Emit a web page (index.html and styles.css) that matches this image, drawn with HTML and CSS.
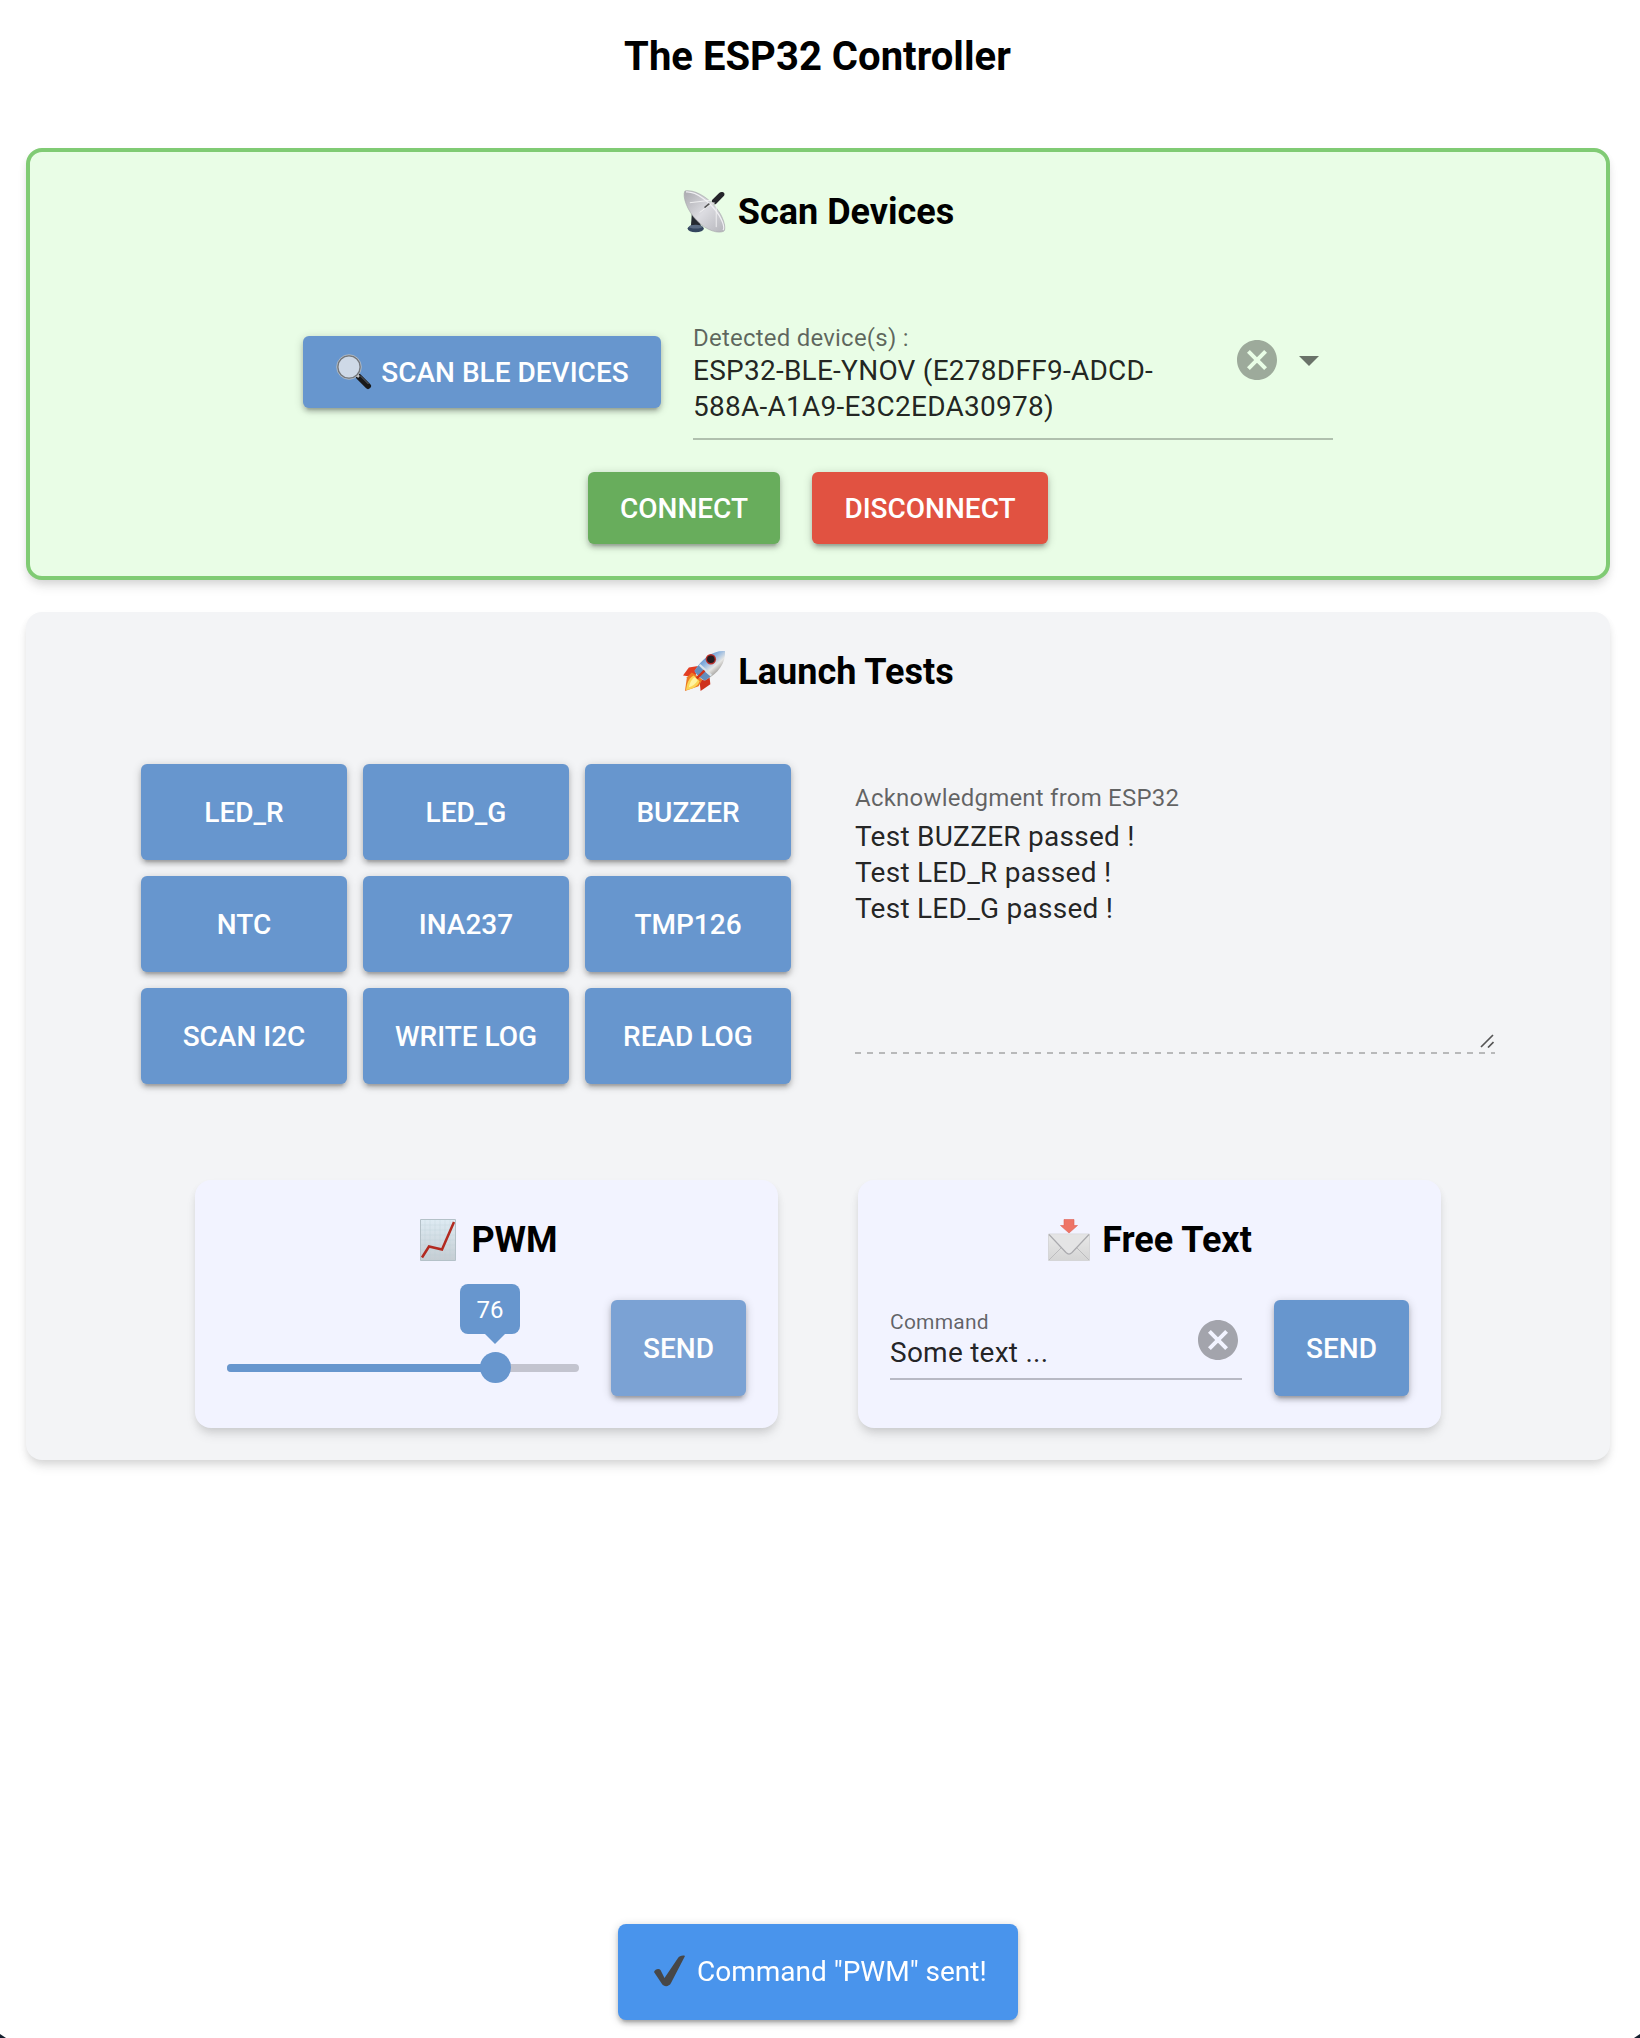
FILE: index.html
```html
<!DOCTYPE html>
<html lang="en">
<head>
<meta charset="utf-8">
<title>The ESP32 Controller</title>
<link rel="stylesheet" href="styles.css">
</head>
<body>
<svg class="defs" width="0" height="0" aria-hidden="true">
  <symbol id="cancel" viewBox="0 0 24 24"><path d="M12 2C6.47 2 2 6.47 2 12s4.47 10 10 10 10-4.47 10-10S17.53 2 12 2zm5 13.59L15.59 17 12 13.41 8.41 17 7 15.59 10.59 12 7 8.41 8.41 7 12 10.59 15.59 7 17 8.41 13.41 12 17 15.59z"/></symbol>
</svg>
<main class="page">
  <h1 class="title">The ESP32 Controller</h1>

  <section class="panel panel-scan">
    <h2 class="heading">
      <svg class="emoji emoji-dish" viewBox="0 0 44 44">
        <defs>
          <linearGradient id="dish" x1="0" y1="0" x2="1" y2="1"><stop offset="0" stop-color="#a9a9ae"/><stop offset=".5" stop-color="#dcdce1"/><stop offset="1" stop-color="#b4b4ba"/></linearGradient>
        </defs>
        <path d="M9 24l7 4 3 11H8z" fill="#252a31"/>
        <ellipse cx="13" cy="39.500" rx="8.300" ry="3.700" fill="#34465f"/><ellipse cx="13" cy="37.500" rx="7" ry="2" fill="#5a6b82"/>
        <path d="M2 1C12-1 28 8 38 24c4 7 6 15 4 18-5 3-18 0-28-11C4 21-1 6 2 1z" fill="url(#dish)" stroke="#a5a5aa" stroke-width=".6"/>
        <path d="M3 2c10-1 25 10 34 24 4 7 6 12 4 15" fill="none" stroke="#f0f0f3" stroke-width="1.200"/>
        <path d="M7 13L33 10M34 11v27M33 11L17 23" fill="none" stroke="#f4f4f5" stroke-width=".9"/>
        <path d="M22 18l5-4" stroke="#555" stroke-width="1.500"/>
        <path d="M30 10l7-7c2-2 7-1 5 3l-8 8c-2 2-6-1-4-4z" fill="#25252a"/><path d="M28 12l5 1-3 3z" fill="#ddd"/>
      </svg>
      <span>Scan Devices</span>
    </h2>
    <div class="scan-row">
      <button class="btn btn-scan">
        <svg class="emoji emoji-lens" viewBox="0 0 36 36">
          <path d="M23 23l9 9" stroke="#18191b" stroke-width="6" stroke-linecap="round"/><path d="M24 21.500l8.500 8.500" stroke="#64676b" stroke-width="1"/>
          <path d="M20 20l3 3" stroke="#c3c5c8" stroke-width="2.500"/>
          <circle cx="13" cy="13" r="11.300" fill="#ced9e7" stroke="#74787d" stroke-width="1.700"/><circle cx="13" cy="13" r="12.300" fill="none" stroke="#c5c8cb" stroke-width=".7"/>
        </svg>
        <span>SCAN BLE DEVICES</span>
      </button>
      <div class="field field-device">
        <div class="field-text">
          <div class="label">Detected device(s) :</div>
          <div class="value">ESP32-BLE-YNOV (E278DFF9-ADCD-<br>588A-A1A9-E3C2EDA30978)</div>
        </div>
        <svg class="icon icon-clear"><use href="#cancel"/></svg>
        <svg class="icon icon-arrow" viewBox="0 0 24 24"><path d="M7 10l5 5 5-5z"/></svg>
      </div>
    </div>
    <div class="connect-row">
      <button class="btn btn-connect"><span>CONNECT</span></button>
      <button class="btn btn-disconnect"><span>DISCONNECT</span></button>
    </div>
  </section>

  <section class="panel panel-tests">
    <h2 class="heading">
      <svg class="emoji emoji-rocket" viewBox="0 0 44 44">
        <defs><linearGradient id="hull" x1=".2" y1="0" x2=".9" y2=".8"><stop offset="0" stop-color="#3773b8"/><stop offset=".4" stop-color="#8db4e0"/><stop offset=".65" stop-color="#e6e6e4"/><stop offset="1" stop-color="#77736e"/></linearGradient></defs>
        <path d="M17 16L6 18 0 26l12 2z" fill="#e23d22"/><path d="M27 26l1 9-10 7-1-10z" fill="#cf321c"/>
        <path d="M9 23L4 28 2 42l14-5 4-7z" fill="#ed7a22"/><path d="M11 26c-6 3-7 9-8 15 6-1 12-3 14-9z" fill="#fbd554"/><path d="M12 28c-4 3-5 6-6 10 4-1 7-3 9-7z" fill="#fff3a0"/>
        <path d="M43 1C31 0 20 8 12 21c-1 2 9 12 11 10C36 24 44 13 43 1z" fill="url(#hull)"/>
        <path d="M12 21l4-5 12 11-5 4c-2 1-12-8-11-10z" fill="#638dbd"/><path d="M17 15l12 11" stroke="#dbe4ea" stroke-width="2"/>
        <path d="M14 29l8-8" stroke="#cf321c" stroke-width="2.500"/>
        <circle cx="28.500" cy="9.500" r="5.300" fill="#b92f2b"/><circle cx="28.500" cy="9.500" r="3.900" fill="#241c20"/>
      </svg>
      <span>Launch Tests</span>
    </h2>
    <div class="tests-row">
      <div class="tests-grid">
        <button class="btn"><span>LED_R</span></button><button class="btn"><span>LED_G</span></button><button class="btn"><span>BUZZER</span></button>
        <button class="btn"><span>NTC</span></button><button class="btn"><span>INA237</span></button><button class="btn"><span>TMP126</span></button>
        <button class="btn"><span>SCAN I2C</span></button><button class="btn"><span>WRITE LOG</span></button><button class="btn"><span>READ LOG</span></button>
      </div>
      <div class="field field-ack">
        <div class="label">Acknowledgment from ESP32</div>
        <div class="value">Test BUZZER passed !<br>Test LED_R passed !<br>Test LED_G passed !</div>
        <svg class="grip" viewBox="0 0 14 14"><path d="M1 13L13 1M8 13.500l5.500-5.500" fill="none" stroke="#555" stroke-width="1.700"/></svg>
        <div class="dashes"></div>
      </div>
    </div>
    <div class="cards">
      <section class="card">
        <h2 class="heading heading-pwm">
          <svg class="emoji emoji-chart" viewBox="0 0 36 42">
            <defs><linearGradient id="paper" x1="0" y1="0" x2="0" y2="1"><stop offset="0" stop-color="#deebf3"/><stop offset="1" stop-color="#c5cdd3"/></linearGradient></defs>
            <path d="M.5.500h35v41H.500z" fill="url(#paper)" stroke="#b4c1c8"/>
            <path d="M5 1v40M10 1v40M15 1v40M20 1v40M25 1v40M30 1v40M1 6h34M1 11h34M1 16h34M1 21h34M1 26h34M1 31h34M1 36h34" stroke="#bccbd5" stroke-width=".3"/>
            <path d="M2 38.500L9 27.500l13 3L34 3" fill="none" stroke="#b22a20" stroke-width="2.500"/>
          </svg>
          <span>PWM</span>
        </h2>
        <div class="card-row">
          <div class="slider">
            <div class="track"><div class="fill" style="width:76%"></div></div>
            <div class="thumb" style="left:76%"></div>
            <div class="pin">76</div>
            <div class="pin-arrow" style="left:76%"></div>
          </div>
          <button class="btn btn-send btn-hover"><span>SEND</span></button>
        </div>
      </section>
      <section class="card">
        <h2 class="heading">
          <svg class="emoji emoji-mail" viewBox="0 0 42 42">
            <defs><linearGradient id="env" x1="0" y1="0" x2="0" y2="1"><stop offset="0" stop-color="#e8e8e8"/><stop offset="1" stop-color="#d5d5d5"/></linearGradient></defs>
            <path d="M.5 15h41v26.500H.500z" fill="url(#env)" stroke="#cfcfcf" stroke-width=".7"/>
            <path d="M1 41l13-13M41 41L28 28" stroke="#bcbcbe" stroke-width="1"/>
            <path d="M1 15.500l17 18q3 3 6 0l17-18" fill="#e4e4e5" stroke="#aaaaae" stroke-width="1.200"/>
            <path d="M16 .5h10v6h3.500L21 14 12.500 6.500H16z" fill="#ee7467" stroke="#df6255" stroke-width=".6"/>
          </svg>
          <span>Free Text</span>
        </h2>
        <div class="card-row">
          <div class="field field-command">
            <div class="field-text">
              <div class="label">Command</div>
              <div class="value">Some text ...</div>
            </div>
            <svg class="icon icon-clear"><use href="#cancel"/></svg>
          </div>
          <button class="btn btn-send"><span>SEND</span></button>
        </div>
      </section>
    </div>
  </section>
</main>
<div class="toast">
  <svg class="emoji-check" viewBox="0 0 32 32"><path d="M1 17c1-3 5-4 6.500-2l4 8L25 3c1-2 5-3 7-2L18 28c-2 4-7 4-9 1z" fill="#474747"/></svg>
  <span>Command "PWM" sent!</span>
</div>
<svg class="corner corner-left" viewBox="0 0 6 4"><path d="M0 0l6 4H0z" fill="#14202f"/></svg>
<svg class="corner corner-right" viewBox="0 0 6 4"><path d="M6 0L0 4h6z" fill="#14202f"/></svg>
</body>
</html>
```
FILE: styles.css
```css
* { box-sizing: border-box; }
html, body { height: 100%; }
body { margin: 0; overflow: hidden; background: #fff; color: rgba(0,0,0,.87); font: 400 28px/36px Roboto, "Liberation Sans", sans-serif; }
svg { display: block; flex: none; }
.defs { position: absolute; }
.page { width: 1636px; padding: 25px 26px 24px; }
.title { margin: 0 1px 59px 0; color: #000; font-size: 40px; line-height: 64px; font-weight: 700; text-align: center; letter-spacing: .03px; }

.panel { border-radius: 16px; box-shadow: 0 8px 12px -2px rgba(0,0,0,.1), 0 4px 8px -2px rgba(0,0,0,.1); padding: 28px 0 32px; }
.panel-scan { background: #e9fde6; border: 4px solid #80cb74; margin-bottom: 32px; }
.panel-tests { background: #f3f4f6; }

.heading { display: flex; justify-content: center; align-items: center; height: 64px; margin: 0; padding-left: 1px; color: #000; font-size: 36px; line-height: 64px; font-weight: 700; }
.heading-pwm { padding-left: 5px; }
.emoji-dish, .emoji-rocket { width: 43px; height: 43px; margin-right: 12px; }
.emoji-dish { margin-top: -2px; }
.emoji-rocket { margin-top: -2px; }
.emoji-chart { width: 36px; height: 42px; margin-right: 15px; margin-top: -1px; }
.emoji-mail { width: 42px; height: 42px; margin-right: 12px; margin-top: -1px; }

.btn { display: flex; align-items: center; justify-content: center; height: 72px; padding: 0; border: 0; border-radius: 6px; background: #6796ce; color: #fff; font: 500 28px/36px Roboto, "Liberation Sans", sans-serif; box-shadow: 0 2px 10px rgba(0,0,0,.2), 0 4px 4px rgba(0,0,0,.14), 0 6px 2px -4px rgba(0,0,0,.12); }
.btn span { padding-top: 2px; }
.scan-row { display: flex; align-items: center; justify-content: center; gap: 32px; margin-top: 60px; }
.btn-scan { width: 358px; padding-left: 1px; }
.emoji-lens { width: 36px; height: 36px; margin-right: 9px; }
.connect-row { display: flex; justify-content: center; gap: 32px; margin-top: 32px; }
.btn-connect { width: 192px; background: #68ad5c; }
.btn-disconnect { width: 236px; background: #e15241; }

.field { display: flex; letter-spacing: .25px; }
.field-text { flex: 1; }
.label { color: rgba(0,0,0,.6); font-size: 24px; line-height: 28px; letter-spacing: .22px; }
.icon { width: 48px; height: 48px; fill: #000; }
.icon-clear { opacity: .32; }
.icon-arrow { opacity: .54; }
.field-device { width: 640px; height: 136px; padding-top: 20px; border-bottom: 2px solid #b0c0ae; }
.field-device .value { margin-top: 1px; }
.field-device .icon { margin-top: 12px; }
.field-device .icon-clear { margin-right: 4px; }

.tests-row { display: flex; justify-content: center; align-items: flex-start; gap: 64px; margin-top: 60px; }
.tests-grid { display: grid; grid-template-columns: repeat(3, 1fr); gap: 16px; width: 650px; }
.tests-grid .btn { height: 96px; }
.field-ack { flex-direction: column; width: 640px; height: 290px; padding-top: 20px; }
.field-ack .value { margin-top: 7px; }
.grip { width: 14px; height: 14px; margin: auto 1px 4px auto; }
.dashes { height: 2px; background: repeating-linear-gradient(90deg, #b8b9ba 0 6px, transparent 6px 12px); }

.cards { display: flex; justify-content: center; gap: 80px; margin-top: 96px; }
.card { width: 583px; height: 248px; padding: 28px 32px 32px; border-radius: 16px; background: #f2f3ff; box-shadow: 0 8px 12px -2px rgba(0,0,0,.1), 0 4px 8px -2px rgba(0,0,0,.1); }
.card-row { display: flex; gap: 32px; margin-top: 28px; }
.btn-send { width: 135px; height: 96px; }
.btn-hover { background: #7ba2d4; }
.slider { position: relative; width: 352px; height: 96px; padding-top: 64px; }
.track { height: 8px; border-radius: 4px; background: #c3c4cf; overflow: hidden; }
.fill { height: 8px; background: #6796ce; }
.thumb { position: absolute; top: 52px; width: 31px; height: 31px; margin-left: -15px; border-radius: 50%; background: #6796ce; }
.pin { position: absolute; left: 233px; top: -16px; width: 60px; height: 50px; border-radius: 8px; background: #6796ce; color: #fff; font-size: 24px; line-height: 53px; text-align: center; }
.pin-arrow { position: absolute; top: 34px; margin-left: -10px; border: 10px solid transparent; border-top-color: #6796ce; border-bottom: 0; }
.field-command { width: 352px; height: 80px; padding-top: 10px; border-bottom: 2px solid #b8b9c4; }
.field-command .label { font-size: 21px; line-height: 24px; }
.field-command .value { padding-top: 1px; }
.field-command .icon { margin-top: 6px; }

.toast { position: fixed; left: 618px; bottom: 18px; width: 400px; height: 96px; display: flex; align-items: center; border-radius: 8px; padding-left: 35px; background: #4994ec; color: #fff; box-shadow: 0 2px 10px rgba(0,0,0,.2), 0 4px 4px rgba(0,0,0,.14), 0 6px 2px -4px rgba(0,0,0,.12); }
.emoji-check { width: 32px; height: 32px; margin: -3px 12px 0 0; }
.corner { position: fixed; bottom: 0; width: 6px; height: 4px; }
.corner-left { left: 0; }
.corner-right { right: 0; }
```
